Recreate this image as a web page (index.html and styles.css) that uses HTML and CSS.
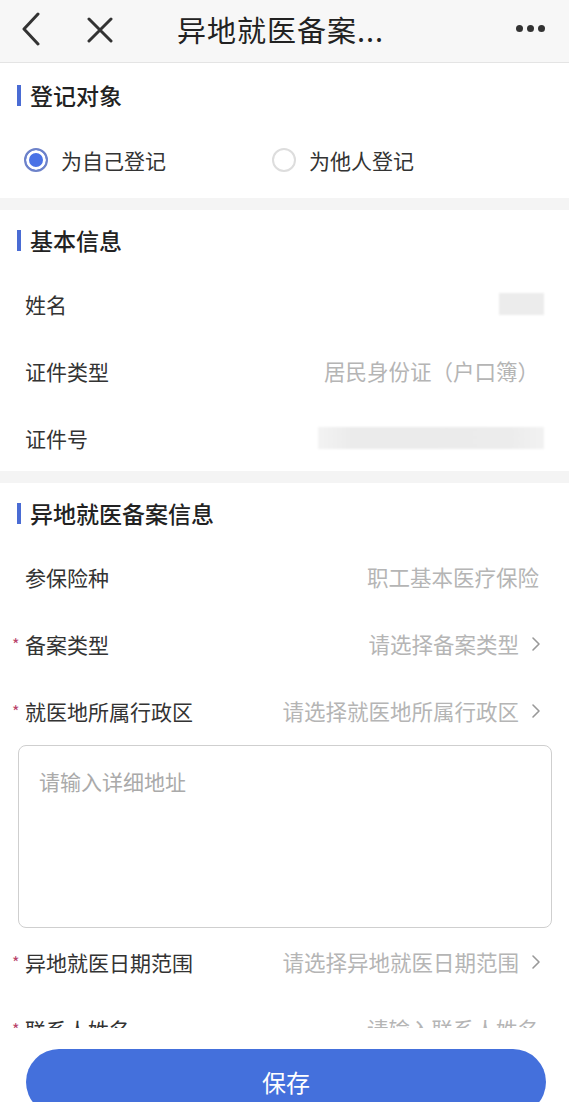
FILE: index.html
```html
<!DOCTYPE html>
<html>
<head>
  <title>异地就医备案</title>
  <meta name="viewport" content="width=device-width, initial-scale=1.0">
  <link rel="stylesheet" href="styles.css">
</head>
<body>
  <div class="page">
    <div class="navbar">
      <div class="nav-left">
        <svg class="nav-icon back" viewBox="0 0 20 34" width="20" height="34">
          <path d="M17 2 L3 17 L17 32" fill="none" stroke="#333" stroke-width="3" stroke-linecap="round" stroke-linejoin="round"/>
        </svg>
        <svg class="nav-icon close" viewBox="0 0 26 26" width="26" height="26">
          <path d="M2 2 L24 24 M24 2 L2 24" fill="none" stroke="#333" stroke-width="3" stroke-linecap="round"/>
        </svg>
      </div>
      <div class="nav-title">异地就医备案...</div>
      <div class="nav-more">
        <span class="dot"></span><span class="dot"></span><span class="dot"></span>
      </div>
    </div>

    <div class="content">
      <!-- 登记对象 -->
      <div class="section first">
        <div class="section-title">登记对象</div>
        <div class="radio-row">
          <label class="radio checked"><span class="circle"></span>为自己登记</label>
          <label class="radio"><span class="circle"></span>为他人登记</label>
        </div>
      </div>

      <!-- 基本信息 -->
      <div class="section">
        <div class="section-title">基本信息</div>
        <div class="row">
          <span class="label">姓名</span>
          <span class="mask short"></span>
        </div>
        <div class="row">
          <span class="label">证件类型</span>
          <span class="value">居民身份证（户口簿）</span>
        </div>
        <div class="row">
          <span class="label">证件号</span>
          <span class="mask long"></span>
        </div>
      </div>

      <!-- 异地就医备案信息 -->
      <div class="section">
        <div class="section-title">异地就医备案信息</div>
        <div class="row">
          <span class="label">参保险种</span>
          <span class="value">职工基本医疗保险</span>
        </div>
        <div class="row link">
          <span class="label required">备案类型</span>
          <span class="value">请选择备案类型<svg class="arrow" viewBox="0 0 10 16" width="10" height="16"><path d="M2 2 L8 8 L2 14" fill="none" stroke="#999" stroke-width="1.6" stroke-linecap="round" stroke-linejoin="round"/></svg></span>
        </div>
        <div class="row link">
          <span class="label required">就医地所属行政区</span>
          <span class="value">请选择就医地所属行政区<svg class="arrow" viewBox="0 0 10 16" width="10" height="16"><path d="M2 2 L8 8 L2 14" fill="none" stroke="#999" stroke-width="1.6" stroke-linecap="round" stroke-linejoin="round"/></svg></span>
        </div>
        <div class="address">
          <div class="placeholder">请输入详细地址</div>
        </div>
        <div class="row link">
          <span class="label required">异地就医日期范围</span>
          <span class="value">请选择异地就医日期范围<svg class="arrow" viewBox="0 0 10 16" width="10" height="16"><path d="M2 2 L8 8 L2 14" fill="none" stroke="#999" stroke-width="1.6" stroke-linecap="round" stroke-linejoin="round"/></svg></span>
        </div>
        <div class="row">
          <span class="label required">联系人姓名</span>
          <span class="value">请输入联系人姓名</span>
        </div>
      </div>
    </div>

    <div class="footer">
      <button class="save-btn">保存</button>
    </div>
  </div>
</body>
</html>
```

FILE: styles.css
```css
html, body {
  margin: 0;
  padding: 0;
  height: 100%;
  overflow: hidden;
}

body {
  font-family: "Noto Sans CJK SC", "Noto Sans", sans-serif;
  background: #f4f4f4;
  color: #333;
}

.page {
  display: flex;
  flex-direction: column;
  height: 100vh;
}

/* Nav bar */
.navbar {
  height: 62px;
  flex: none;
  display: flex;
  align-items: center;
  background: #f7f7f7;
  border-bottom: 1px solid #e4e4e4;
}
.nav-left {
  display: flex;
  align-items: center;
  padding-left: 21px;
  gap: 46px;
}
.nav-icon.back {
  margin-top: -4px;
}
.nav-icon.close {
  margin-top: -2px;
}
.nav-title {
  margin-left: 64px;
  font-size: 29px;
  color: #222;
  letter-spacing: 1px;
  margin-top: -4px;
}
.nav-more {
  margin-left: auto;
  margin-right: 24px;
  display: flex;
  gap: 4px;
  margin-top: -6px;
}
.dot {
  width: 7px;
  height: 7px;
  border-radius: 50%;
  background: #333;
}

/* Content */
.content {
  flex: 1;
  overflow: hidden;
}

.section {
  background: #fff;
  margin-top: 12px;
}
.section.first {
  margin-top: 0;
  padding-bottom: 5px;
}

.section-title {
  height: 60px;
  display: flex;
  align-items: center;
  padding-left: 17px;
  font-size: 23px;
  font-weight: 500;
  color: #222;
}
.section.first .section-title {
  height: 64px;
}
.section-title::before {
  content: "";
  width: 4px;
  height: 21px;
  background: #4a6cd4;
  margin-right: 9px;
}

.radio-row {
  height: 66px;
  display: flex;
  align-items: center;
  padding-left: 24px;
}
.radio {
  display: flex;
  align-items: center;
  font-size: 21px;
  color: #333;
  width: 248px;
}
.radio .circle {
  width: 20px;
  height: 20px;
  border-radius: 50%;
  border: 2px solid #ddd;
  margin-right: 13px;
  box-sizing: content-box;
  background: #fff;
}
.radio.checked .circle {
  border-color: #6d82c9;
  background: #4a72e6;
  box-shadow: inset 0 0 0 3px #fff;
}

.row {
  height: 67px;
  display: flex;
  align-items: center;
  justify-content: space-between;
  padding: 0 30px 0 25px;
  font-size: 21px;
}
.row:first-of-type {
  padding-top: 0;
}
.label {
  color: #333;
  position: relative;
}
.label.required::before {
  content: "*";
  position: absolute;
  left: -13px;
  top: 3px;
  font-size: 16px;
  color: #b8436a;
}
.value {
  color: #b5b5b5;
  display: flex;
  align-items: center;
  font-size: 21.5px;
}
.arrow {
  margin-left: 12px;
}
.row.link {
  padding-right: 28px;
}

.mask {
  height: 22px;
  background: #ececec;
  margin-right: -5px;
  filter: blur(1px);
}
.mask.short {
  width: 45px;
}
.mask.long {
  width: 226px;
  background: linear-gradient(90deg, #f3f3f3, #ebebeb 15%, #ececec 85%, #f2f2f2);
}

.address {
  margin: 1px 17px 0 18px;
  border: 1px solid #cfcfcf;
  border-radius: 8px;
  padding: 25px 20px 15px;
  height: 141px;
}
.placeholder {
  font-size: 21px;
  color: #aaa;
  line-height: 1;
}

/* Footer */
.footer {
  flex: none;
  height: 74px;
  background: #fff;
  padding: 21px 23px 0 26px;
  box-sizing: border-box;
  overflow: hidden;
}
.save-btn {
  width: 100%;
  height: 66px;
  border: none;
  border-radius: 33px;
  background: #4470dc;
  color: #fff;
  font-family: inherit;
  font-size: 24px;
  padding: 0 0 2px;
}
```
